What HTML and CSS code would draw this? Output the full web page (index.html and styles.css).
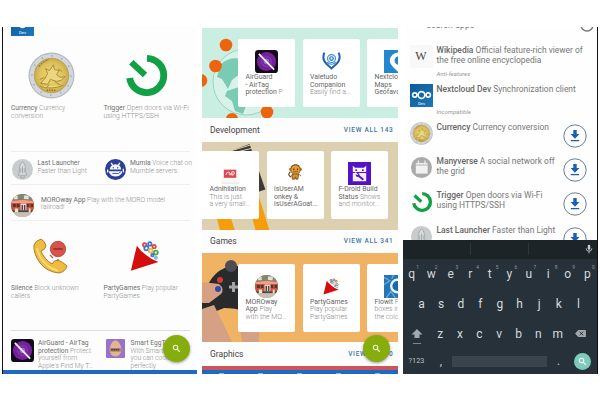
FILE: index.html
```html
<!DOCTYPE html>
<html lang="en">
<head>
<meta charset="utf-8">
<title>App catalogue</title>
<link rel="stylesheet" href="styles.css">
</head>
<body>
<svg class="defs" width="0" height="0">
  <defs>
    <radialGradient id="gold"><stop offset="0" stop-color="#f0d878"/><stop offset="0.7" stop-color="#dfc25c"/><stop offset="1" stop-color="#c9ab4a"/></radialGradient>
    <linearGradient id="ncblue" x1="0" y1="0" x2="1" y2="1"><stop offset="0" stop-color="#0a5c9c"/><stop offset="1" stop-color="#1d78b8"/></linearGradient>
    <clipPath id="round"><circle cx="24" cy="24" r="24"/></clipPath>
  </defs>
  <symbol id="coin" viewBox="0 0 48 48">
    <circle cx="24" cy="24" r="23.5" fill="#b3b9c0"/>
    <circle cx="24" cy="24" r="22.3" fill="#d3d7dc"/>
    <circle cx="24" cy="24" r="20" fill="none" stroke="#9aa1a9" stroke-width="1.4" stroke-dasharray="1.4 9"/>
    <circle cx="24" cy="24" r="17.6" fill="url(#gold)" stroke="#a99654" stroke-width=".7"/>
    <path d="M13 32q5-5 7-10l-2-5 4 2 4-6 1 5 5 1-3 4 4 3 5-1-4 4-5 1-6-2-3 5zM12 35q12 4 24-1M17 26l-5 2M27 30l6 4M22 33l-4 4M31 17l4 3" fill="#ecd682" stroke="#a98c38" stroke-width="1"/>
    <path d="M11 15q5-6 10-7" fill="none" stroke="#8b7a45" stroke-width="1.2" stroke-dasharray="2 1"/>
    <path d="M19 39h10" stroke="#8f7227" stroke-width="1.6" stroke-dasharray="1.5 1"/>
  </symbol>
  <symbol id="power" viewBox="0 0 48 48">
    <path d="M25.5 7.5A17.5 17.5 0 1 1 7.8 27.5" fill="none" stroke="#12a044" stroke-width="7"/>
    <path d="M9.5 11.5L23.5 24.5" stroke="#12a044" stroke-width="6.5"/>
  </symbol>
  <symbol id="launcher" viewBox="0 0 48 48">
    <circle cx="24" cy="24" r="24" fill="#c9cccd"/>
    <path d="M24 6q9 9 7 24l3 7h-20l3-7Q15 15 24 6z" fill="#d9dbdc" stroke="#9da2a4" stroke-width="1.8"/>
    <path d="M24 17v15M20 21v10M28 21v10M20 39v4h8v-4" fill="none" stroke="#999fa2" stroke-width="1.8"/>
  </symbol>
  <symbol id="mumla" viewBox="0 0 48 48">
    <circle cx="24" cy="24" r="24" fill="#2c4095"/>
    <path d="M11 24a13 12 0 0 1 26 0zM8 28h31v4q-6 8-15 8-10 0-14-8z" fill="#f4f6fc"/>
    <path d="M14 9l4 6M34 9l-4 6M6 24v7M42 22v8" stroke="#f4f6fc" stroke-width="3"/>
    <path d="M17 33h14l5-4" fill="none" stroke="#2c4095" stroke-width="2"/><circle cx="19" cy="20" r="1.5" fill="#2c4095"/><circle cx="29" cy="20" r="1.5" fill="#2c4095"/>
  </symbol>
  <symbol id="train" viewBox="0 0 48 48">
    <g clip-path="url(#round)">
      <path d="M0 0h48v48H0z" fill="#a9a18f"/><path d="M0 0h48v13H0z" fill="#7b8a70"/><path d="M6 4h8v7H6zM27 3h10v8H27z" fill="#e0e1d9"/>
      <path d="M0 14l24-3 24 3v21H0z" fill="#cf4f36"/><path d="M0 15l24-3 24 3v4H0z" fill="#e8a08a"/>
      <path d="M4 21h6v6H4zM12 21h6v6h-6zM33 21h5v6h-5zM41 21h5v6h-5z" fill="#493a38"/>
      <path d="M20 20h12v17H20z" fill="#f0ddd4"/><path d="M22 23h3v11h-3zM27 23h3v11h-3z" fill="#4d4645"/>
      <path d="M0 34h48v4H0z" fill="#4a4744"/><path d="M0 38h48v10H0z" fill="#c6bfb3"/><path d="M8 30h7v8H8zM37 30h4v8h-4z" fill="#eee5da"/>
    </g>
  </symbol>
  <symbol id="callblock" viewBox="0 0 36 36">
    <path d="M1 7Q2 3 8 1q4 2 5 7-1 4-5 5 3 8 11 13 2-4 6-4 5 2 9 6-2 6-8 7-12-1-19-10Q0 15 1 7z" fill="#f1bb3d" stroke="#a8822c" stroke-width="1"/>
    <path d="M4 10q2 12 14 20l7 3" fill="none" stroke="#fbd979" stroke-width="2"/>
    <circle cx="25" cy="11" r="7.7" fill="#d95448" stroke="#a84138" stroke-width=".8"/><path d="M20.5 11h9" stroke="#8e302a" stroke-width="1.6"/>
    <path d="M17 17l3 3M25 21v2" stroke="#d95448" stroke-width="1.3"/>
  </symbol>
  <symbol id="party" viewBox="0 0 36 36">
    <g fill="none" stroke-width="2">
      <circle cx="17" cy="5" r="2" stroke="#db4437"/><circle cx="23" cy="4" r="2" stroke="#3c74d6"/><circle cx="19" cy="9" r="2.4" stroke="#3c74d6"/>
      <circle cx="28" cy="7" r="2" stroke="#e2453a"/><circle cx="24" cy="12" r="2.2" stroke="#e8b92f"/><circle cx="30" cy="14" r="2.3" stroke="#43a85a"/>
      <circle cx="30" cy="20" r="1.3" stroke="#7fb7df"/><circle cx="26" cy="17" r="1.4" stroke="#3c74d6"/>
    </g>
    <path d="M8 6q4 6 11 11 6 5 14 8L1 35z" fill="#d40d0d"/>
  </symbol>
  <symbol id="airguard" viewBox="0 0 48 48">
    <rect width="48" height="48" rx="7" fill="#110c18"/><circle cx="24" cy="24" r="20" fill="#77209b"/>
    <circle cx="24" cy="24" r="10" fill="none" stroke="#8a45ad" stroke-width="2"/><circle cx="24" cy="24" r="5" fill="#7864bd" stroke="#8f86cf" stroke-width="2"/>
    <path d="M8 8l32 33" stroke="#f5eff7" stroke-width="3.6"/>
  </symbol>
  <symbol id="egg" viewBox="0 0 36 36">
    <rect width="36" height="36" rx="2" fill="#9872cb"/><path d="M18 3c7 0 12 12 11 19s-5 11-11 11S8 29 7 22 11 3 18 3z" fill="#e3b491"/>
    <path d="M8 17h20v7H8z" fill="#a67f6d"/><path d="M10 20.500h16" stroke="#513b3c" stroke-width="3" stroke-dasharray="3 1"/>
  </symbol>
  <symbol id="search" viewBox="0 0 24 24"><circle cx="9.500" cy="9.500" r="6" fill="none" stroke="currentColor" stroke-width="2.700"/><path d="M14 14l7 7" stroke="currentColor" stroke-width="3.300"/></symbol>
  <symbol id="valetudo" viewBox="0 0 48 48">
    <path d="M6 4q-7 17 5 28l13 12 13-12Q49 21 42 4" fill="none" stroke="#1d62aa" stroke-width="5"/>
    <circle cx="24" cy="19" r="10" fill="none" stroke="#3b8fd3" stroke-width="3"/><circle cx="24" cy="19" r="4.500" fill="#dbeefa" stroke="#2470b8" stroke-width="3"/>
    <path d="M13 28q11 11 22 0" fill="none" stroke="#3684cb" stroke-width="3"/>
  </symbol>
  <symbol id="maps" viewBox="0 0 48 48"><path d="M0 0h48v48H0z" fill="#2387d0"/><path d="M30 5a18 18 0 0 0-18 18q0 8 18 23 18-15 18-23A18 18 0 0 0 30 5z" fill="#fff"/><circle cx="31" cy="22" r="9" fill="#2387d0"/></symbol>
  <symbol id="adni" viewBox="0 0 48 48"><path d="M5 29h38v14H5z" fill="#f8f9f7"/><path d="M5 44h38" stroke="#dae4da" stroke-width="2"/><rect x="10" y="16" width="26" height="17" fill="#db4850"/><path d="M14 27q3-8 7-6t2 7M20 25h10M27 20q6-1 5 4t-6 3z" fill="none" stroke="#fbe3e3" stroke-width="2"/></symbol>
  <symbol id="monkey" viewBox="0 0 48 48"><path d="M14 36Q2 31 11 22M13 10Q24 0 34 9" fill="none" stroke="#6b441e" stroke-width="3"/><circle cx="12" cy="16" r="4.500" fill="#c18331"/><circle cx="36" cy="16" r="4.500" fill="#c18331"/><circle cx="24" cy="17" r="12" fill="#e69e2e" stroke="#74491d" stroke-width="2"/><path d="M16 28h16l-2 13h-5l-1-6-2 6h-6z" fill="#da922b" stroke="#74491d" stroke-width="2"/><circle cx="20" cy="16" r="2" fill="#4a2f1a"/><circle cx="29" cy="16" r="2" fill="#4a2f1a"/><path d="M18 22h12M16 30l-5 4M33 29l5 4" stroke="#74491d" stroke-width="2"/></symbol>
  <symbol id="build" viewBox="0 0 48 48"><path d="M0 0h48v48H0z" fill="#5412c8"/><path d="M10 8l5 4h18l5-4v13H10zM10 23h28v17H10z" fill="#f4effb"/><circle cx="17" cy="17" r="2" fill="#5412c8"/><circle cx="31" cy="17" r="2" fill="#5412c8"/><path d="M20 27l12 10" stroke="#5412c8" stroke-width="4"/><circle cx="20" cy="27" r="4" fill="#5412c8"/><path d="M15 22l5 5" stroke="#fff" stroke-width="2.500"/></symbol>
  <symbol id="flow" viewBox="0 0 48 48"><path d="M0 0h48v48H0z" fill="#2773b8"/><path d="M0 5l12 7-12 8M5 48l9-14 10 14M20 0l-4 8" fill="none" stroke="#63a7d5" stroke-width="3"/><circle cx="28" cy="23" r="13" fill="#1d67ae" stroke="#e4f4fb" stroke-width="5"/></symbol>
  <symbol id="nextcloud" viewBox="0 0 48 48"><path d="M0 0h48v48H0z" fill="url(#ncblue)"/><g fill="none" stroke="#fff" stroke-width="3.400"><circle cx="24" cy="23" r="7"/><circle cx="10" cy="23" r="4.500"/><circle cx="38" cy="23" r="4.500"/></g><text x="24" y="43" text-anchor="middle" class="dev">Dev</text></symbol>
  <symbol id="many" viewBox="0 0 48 48"><circle cx="24" cy="24" r="24" fill="#aaa"/><path d="M11 17h27v21H11z" fill="#f1f1f1"/><path d="M11 15h27" stroke="#ececec" stroke-width="3"/><path d="M17 8v9M32 8v9" stroke="#ececec" stroke-width="3"/><path d="M11 19h27" stroke="#b8b8b8" stroke-width="1.500"/></symbol>
  <symbol id="download" viewBox="0 0 24 24"><circle cx="12" cy="12" r="11.200" fill="#fff" stroke="#57728b" stroke-width=".9"/><path d="M10.300 6h3.400v4h2.800L12 14.700 7.500 10h2.800z" fill="#1b5fb5"/><path d="M7.800 16.600h8.400" stroke="#1b5fb5" stroke-width="1.300"/></symbol>
</svg>

<main class="screens">
  <section class="phone latest">
    <div class="crop"><svg class="i23"><use href="#nextcloud"/></svg></div>
    <div class="features">
      <article class="feature"><svg class="art"><use href="#coin"/></svg><p><span><b>Currency</b> Currency</span><span>conversion</span></p></article>
      <article class="feature"><svg class="art"><use href="#power"/></svg><p class="open"><span><b>Trigger</b> Open doors via Wi-Fi</span><span>using HTTPS/SSH</span></p></article>
    </div>
    <div class="pair">
      <article class="small"><svg class="i21"><use href="#launcher"/></svg><p><span><b>Last Launcher</b></span><span>Faster than Light</span></p></article>
      <article class="small"><svg class="i21"><use href="#mumla"/></svg><p><span><b>Mumla</b> Voice chat on</span><span>Mumble servers</span></p></article>
    </div>
    <article class="wide"><svg class="i23"><use href="#train"/></svg><p><span><b>MOROway App</b> Play with the MORO model</span><span>railroad!</span></p></article>
    <div class="features second">
      <article class="feature"><svg class="art36"><use href="#callblock"/></svg><p><span><b>Silence</b> Block unknown</span><span>callers</span></p></article>
      <article class="feature"><svg class="art36"><use href="#party"/></svg><p><span><b>PartyGames</b> Play popular</span><span>PartyGames</span></p></article>
    </div>
    <div class="pair last">
      <article class="small"><svg class="i23"><use href="#airguard"/></svg><p><span><b>AirGuard - AirTag</b></span><span><b>protection</b> Protect</span><span>yourself from</span><span>Apple's Find My T...</span></p></article>
      <article class="small"><svg class="i19"><use href="#egg"/></svg><p><span><b>Smart EggTimer</b></span><span>With Smart Egg</span><span>you can cook</span><span>perfectly</span></p></article>
    </div>
    <div class="bottom"></div>
    <div class="fab"><svg><use href="#search"/></svg></div>
  </section>

  <section class="phone categories">
    <div class="banner green">
      <svg class="scene" viewBox="0 0 195 90"><circle cx="44" cy="54" r="33" fill="#d9f2e9" stroke="#8bcab8" stroke-width=".8"/><path d="M19 36q9-8 20-5v14l-9 7-4 9-6-10-5-2zM25 63l12-4 9 13-5 14-8-3-3-10-7-5z" fill="#79cbb3"/><g fill="#ed640c"><circle cx="24" cy="17" r="6.300"/><circle cx="13.500" cy="38" r="6.300"/><circle cx="-1" cy="52.500" r="6.300"/><circle cx="65" cy="84" r="6.300"/><circle cx="30" cy="91" r="6"/></g></svg>
      <div class="cards inset">
        <article class="card"><svg class="i23"><use href="#airguard"/></svg><p><span><b>AirGuard</b></span><span><b>- AirTag</b></span><span><b>protection</b> P</span></p></article>
        <article class="card"><svg class="i19"><use href="#valetudo"/></svg><p><span><b>Valetudo</b></span><span><b>Companion</b></span><span>Easily find a...</span></p></article>
        <article class="card"><svg class="i23"><use href="#maps"/></svg><p><span><b>Nextcloud</b></span><span><b>Maps</b></span><span><b>Geofavorites</b></span></p></article>
      </div>
    </div>
    <header class="cat"><h2>Development</h2><a>VIEW ALL 143</a></header>
    <div class="banner sand">
      <svg class="scene" viewBox="0 0 195 89"><path d="M25 10L47 2l16 46-12 4z" fill="#3d3b36"/><path d="M28 9l20-6M30 11l21-5" stroke="#ded2b4"/><path d="M12 70h14l6 19H17zM48 70l9-13 10 32H53z" fill="#f59d0a"/></svg>
      <div class="cards">
        <article class="card"><svg class="i23"><use href="#adni"/></svg><p><span><b>Adnihilation</b></span><span>This is just</span><span>a very small...</span></p></article>
        <article class="card"><svg class="i19"><use href="#monkey"/></svg><p><span><b>isUserAM</b></span><span><b>onkey &amp;</b></span><span><b>isUserAGoat...</b></span></p></article>
        <article class="card"><svg class="i23"><use href="#build"/></svg><p><span><b>F-Droid Build</b></span><span><b>Status</b> Shows</span><span>and monitor...</span></p></article>
      </div>
    </div>
    <header class="cat games"><h2>Games</h2><a>VIEW ALL 341</a></header>
    <div class="banner orange">
      <svg class="scene" viewBox="0 0 195 89"><path d="M0 49q6-30 28-36h26v55Q45 55 22 55L0 64z" fill="#292a2c"/><circle cx="29" cy="13" r="6" fill="#4b4f54"/><path d="M0 29l17 2q6 5 2 10L7 50H0z" fill="#d7a080"/><path d="M0 56l12-4L30 89H0zM36 60l21 5v24H40z" fill="#d5a184"/><circle cx="18" cy="27" r="3" fill="#d83b35"/><circle cx="16" cy="36" r="3" fill="#2e4aaf"/><path d="M27 34h9M31.500 29v10" stroke="#a4a5a5" stroke-width="3"/></svg>
      <div class="cards inset">
        <article class="card"><svg class="i23"><use href="#train"/></svg><p><span><b>MOROway</b></span><span><b>App</b> Play</span><span>with the MO...</span></p></article>
        <article class="card"><svg class="i17"><use href="#party"/></svg><p><span><b>PartyGames</b></span><span>Play popular</span><span>PartyGames</span></p></article>
        <article class="card"><svg class="i23"><use href="#flow"/></svg><p><span><b>Flowit</b> Fill</span><span>boxes in</span><span>the color</span></p></article>
      </div>
    </div>
    <header class="cat graphics"><h2>Graphics</h2><a>VIEW ALL 60</a></header>
    <div class="red"></div>
    <div class="bottom nav"><i></i><i></i><i></i><i></i><i></i></div>
    <div class="fab"><svg><use href="#search"/></svg></div>
  </section>

  <section class="phone results">
    <div class="query"><span>search apps</span><svg class="i14" viewBox="0 0 14 14"><circle cx="7" cy="7" r="6" fill="none" stroke="#777" stroke-width="1.500"/></svg></div>
    <div class="list">
      <article class="row wiki"><div class="w">W</div><p><span><b>Wikipedia</b> Official feature-rich viewer of</span><span>the free online encyclopedia</span><em>Anti-features</em></p></article>
      <article class="row next"><svg class="i23"><use href="#nextcloud"/></svg><p><span><b>Nextcloud Dev</b> Synchronization client</span><em>Incompatible</em></p></article>
      <article class="row"><svg class="i23"><use href="#coin"/></svg><p><span><b>Currency</b> Currency conversion</span></p><svg class="get"><use href="#download"/></svg></article>
      <article class="row"><svg class="i21"><use href="#many"/></svg><p><span><b>Manyverse</b> A social network off</span><span>the grid</span></p><svg class="get"><use href="#download"/></svg></article>
      <article class="row"><svg class="i23"><use href="#power"/></svg><p><span><b>Trigger</b> Open doors via Wi-Fi</span><span>using HTTPS/SSH</span></p><svg class="get"><use href="#download"/></svg></article>
      <article class="row"><svg class="i21"><use href="#launcher"/></svg><p><span><b>Last Launcher</b> Faster than Light</span></p><svg class="get"><use href="#download"/></svg></article>
    </div>
    <div class="keyboard">
      <div class="strip"><i></i><i></i><svg class="mic" viewBox="0 0 12 16"><rect x="4" y="1" width="4" height="8" rx="2" fill="#c5cbce"/><path d="M1.500 7a4.500 4.500 0 0 0 9 0M6 11v4" fill="none" stroke="#c5cbce" stroke-width="1.400"/></svg></div>
      <div class="keys ten"><kbd>q<sup>1</sup></kbd><kbd>w<sup>2</sup></kbd><kbd>e<sup>3</sup></kbd><kbd>r<sup>4</sup></kbd><kbd>t<sup>5</sup></kbd><kbd>y<sup>6</sup></kbd><kbd>u<sup>7</sup></kbd><kbd>i<sup>8</sup></kbd><kbd>o<sup>9</sup></kbd><kbd>p<sup>0</sup></kbd></div>
      <div class="keys nine"><kbd>a</kbd><kbd>s</kbd><kbd>d</kbd><kbd>f</kbd><kbd>g</kbd><kbd>h</kbd><kbd>j</kbd><kbd>k</kbd><kbd>l</kbd></div>
      <div class="keys shiftrow"><svg class="shift" viewBox="0 0 12 18"><path d="M6 2l5.500 5.500h-3V11h-5V7.500h-3z" fill="#a2a9ae"/><path d="M2 16.500h8" stroke="#7d878e"/></svg><kbd>z</kbd><kbd>x</kbd><kbd>c</kbd><kbd>v</kbd><kbd>b</kbd><kbd>n</kbd><kbd>m</kbd><svg class="del" viewBox="0 0 12 10"><path d="M3.500 1H12v8H3.500L0 5z" fill="#a2a9ae"/><path d="M5 3l4 4M9 3L5 7" stroke="#263239" stroke-width="1.100"/></svg></div>
      <div class="keys space"><span>?123</span><span>,</span><div class="spacebar"></div><span>.</span><div class="go"><svg><use href="#search"/></svg></div></div>
    </div>
  </section>
</main>
</body>
</html>
```
FILE: styles.css
```css
* { box-sizing: border-box; }
body { margin: 0; background: #fff; font-family: Roboto, "Liberation Sans", sans-serif; }
.defs { position: absolute; }
svg { display: block; flex: none; }
p, h2 { margin: 0; }
p span, p em { display: block; white-space: nowrap; }
.screens { display: flex; gap: 5px; padding: 27px 2px; height: 400px; overflow: hidden; }
.phone { width: 195.5px; height: 347px; flex: none; overflow: hidden; position: relative; display: flex; flex-direction: column; background: #fdfdfd; }
.phone > * { flex: none; }
.i23 { width: 23px; height: 23px; }
.i21 { width: 21px; height: 21px; margin: 0 1px; }
.i19 { width: 19px; height: 19px; margin: 0 2px; }
.i17 { width: 17px; height: 17px; }
.i14 { width: 14px; height: 14px; }
.dev { font: 500 9px Roboto, sans-serif; fill: #cfe4f4; }

.latest { width: 195px; border-left: 1px solid #111; font-size: 6.7px; line-height: 7.7px; font-weight: 300; }
.latest p { color: #8f8f8f; }
.latest b { font-weight: 400; color: #6f6f6f; }
.crop { height: 9px; padding-left: 8px; overflow: hidden; display: flex; align-items: flex-end; }
.features { display: grid; grid-template-columns: 92.5px 92px; height: 115px; padding-left: 8px; }
.feature { display: flex; flex-direction: column; padding-top: 16px; }
.art { width: 47px; height: 47px; margin-left: 17px; margin-bottom: 6px; }
.feature:nth-child(2) .art { margin: -1px 0 7px 18px; }
.open { font-size: 6.9px; }
.pair { display: grid; grid-template-columns: 92.5px 92px; height: 34px; margin-left: 8px; margin-right: 7px; border-top: 1px solid #eee; border-bottom: 1px solid #eee; padding-top: 7px; }
.small { display: flex; gap: 3.5px; }
.small p { padding-top: 1px; }
.wide { height: 36px; margin: 0 7px 0 8px; padding-top: 9px; display: flex; gap: 7px; border-bottom: 1px solid #eee; }
.wide p { padding-top: 2.5px; }
.second { height: 109px; }
.second .feature { padding-top: 17px; }
.art36 { width: 36px; height: 36px; margin: 0 0 11px 22px; }
.feature:nth-child(2) .art36 { width: 31px; height: 32px; margin: 2px 0 13px 26px; }
.last { height: 39.5px; border-bottom: 0; border-color: #ddd; padding-top: 8px; }
.last .small { gap: 4px; }
.bottom { height: 4.500px; background: #1d69c4; }
.fab { position: absolute; left: 160px; top: 308px; width: 27px; height: 27px; border-radius: 50%; background: #87ad0d; color: #eff5dc; box-shadow: 0 1px 3px #0006; display: grid; place-items: center; }
.categories .fab { left: 161px; }
.fab svg { width: 9px; height: 9px; }

.banner { position: relative; height: 90px; margin-top: 1px; padding-top: 11px; overflow: hidden; }
.scene { position: absolute; left: 0; top: 0; width: 195px; height: 100%; }
.green { background: #cbeee3; }
.sand { background: #ddd0b0; margin-top: 0; height: 88px; padding-top: 9.500px; }
.orange { background: #efb363; margin-top: 0; height: 89px; }
.cards { display: flex; gap: 7.500px; position: relative; }
.inset { padding-left: 36px; }
.card { width: 57px; height: 68px; flex: none; overflow: hidden; padding: 11px 0 0 7.500px; background: #fff; border-radius: 2px; display: flex; flex-direction: column; font-size: 6.900px; line-height: 7.700px; font-weight: 300; color: #858585; }
.cards:not(.inset) .card:first-child { border-radius: 0 2px 2px 0; }
.card b { font-weight: 400; color: #666; }
.card > svg { margin-left: 9.500px; margin-bottom: 1px; }
.card > .i19 { margin: 1px 0 4px 11.500px; }
.card > .i17 { margin: 3px 0 4px 13px; }
.cat { height: 23.500px; padding: 0 4px 0 8px; display: flex; justify-content: space-between; align-items: center; }
.games { height: 23px; }
.graphics { height: 24px; }
.cat h2 { font-size: 8.500px; font-weight: 400; color: #444; }
.cat a { font-size: 6.500px; font-weight: 500; letter-spacing: .72px; color: #3b76a7; }
.red { height: 4px; background: #cb5558; }
.nav { display: flex; justify-content: space-around; align-items: flex-end; }
.nav i { width: 5px; height: 1px; background: #8fb5e2; border-radius: 1px; }

.results { background: #fefefe; border-right: 1px solid #111; color: #777; font-size: 8.450px; line-height: 10px; }
.query { height: 14px; padding: 0 3px 0 24px; display: flex; justify-content: space-between; }
.query span { line-height: 10px; margin-top: -7.500px; letter-spacing: .2px; color: #777; }
.query .i14 { margin-top: -9.500px; }
.list { height: 199px; overflow: hidden; }
.row { height: 34.200px; display: flex; padding: 4px 10px 0 7px; gap: 4px; }
.row p { flex: 1; }
.row b { font-weight: 500; color: #666; }
.row > .i21 { margin-top: 1px; }
.row .get { width: 24px; height: 24px; margin-top: 2px; }
.row em { font-size: 6.100px; color: #999; line-height: 8px; }
.wiki { height: 38.500px; }
.wiki em { margin-top: 4.500px; }
.next { height: 38.500px; }
.next em { margin-top: 14.500px; }
.w { width: 23px; height: 23px; background: #f8f8f8; display: grid; place-items: center; font: 12px "Liberation Serif", serif; color: #444; }

.keyboard { height: 134px; background: #263139; color: #d6dadd; }
.strip { height: 18.500px; background: #1c2427; display: grid; grid-template-columns: 68px 58px 1fr; align-items: center; }
.strip i { height: 12px; border-right: 1px solid #2c363b; }
.mic { width: 8px; height: 10px; justify-self: end; margin-right: 4px; }
.keys { height: 30px; display: grid; grid-template-columns: repeat(10, 19.500px); align-items: center; justify-items: center; }
.ten { margin-left: -.5px; }
.nine { grid-template-columns: repeat(9, 19.600px); padding-left: 9.300px; }
kbd { font: 12px/12px Roboto, sans-serif; position: relative; }
sup { position: absolute; font-size: 4.800px; line-height: 5px; left: 8px; top: -3px; color: #929b9f; }
.shiftrow { grid-template-columns: 28px repeat(7, 19.600px) 26px; }
.shift { width: 12px; height: 18px; margin-top: 4px; }
.del { width: 11px; height: 9px; }
.space { height: 25.500px; grid-template-columns: 28px 21px 96px 22px 26px; font-size: 7.300px; }
.space > span { color: #bcc3c7; }
.space > span:nth-child(2), .space > span:nth-child(4) { font-size: 12px; }
.spacebar { width: 95px; height: 11px; background: #3a444c; }
.go { width: 17px; height: 17px; border-radius: 50%; background: #7fcabb; color: #eefaf7; display: grid; place-items: center; }
.go svg { width: 9px; height: 9px; }
```
